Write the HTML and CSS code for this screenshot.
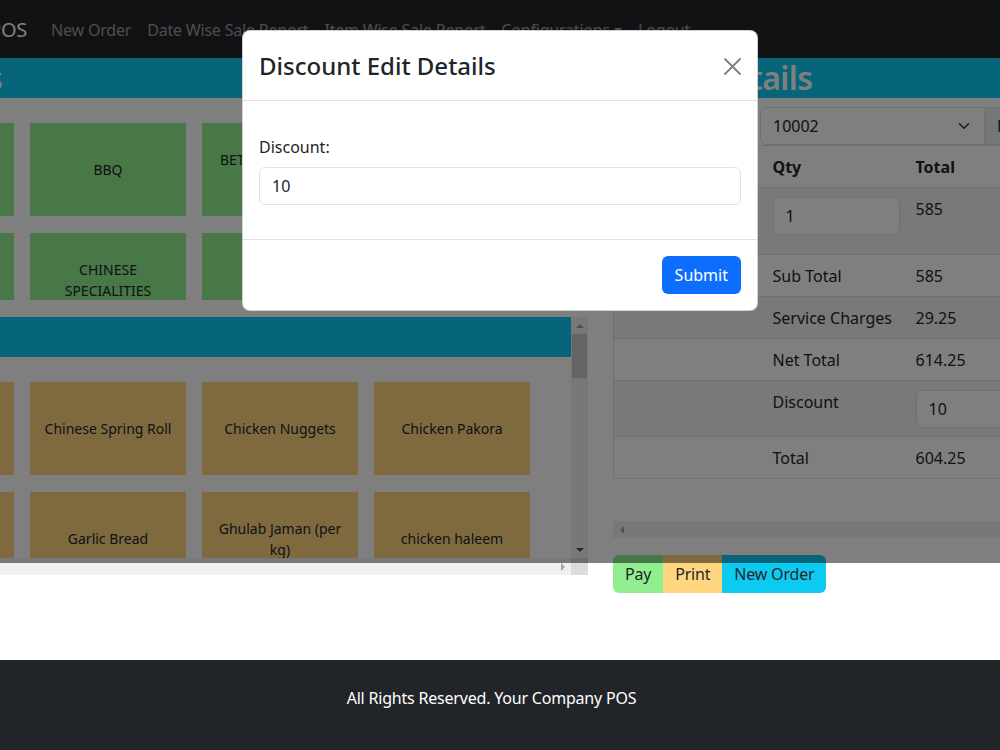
FILE: index.html
```html
<!DOCTYPE html>
<html lang="en">
<head>
    <meta charset="UTF-8">
    <meta name="viewport" content="width=device-width, initial-scale=1.0">
    <title>POS - New Order</title>
    <link rel="stylesheet" href="styles.css">
</head>
<body>
    <nav class="navbar">
        <div class="nav-inner">
            <a class="brand" href="#">POS</a>
            <a class="nav-link" href="#">New Order</a>
            <a class="nav-link" href="#">Date Wise Sale Report</a>
            <a class="nav-link" href="#">Item Wise Sale Report</a>
            <a class="nav-link dropdown-toggle" href="#">Configurations</a>
            <a class="nav-link" href="#">Logout</a>
        </div>
    </nav>

    <main class="main">
        <section class="left-col">
            <div class="left-inner">
                <h2 class="panel-title">Categories</h2>
                <div class="category-box">
                    <div class="tile-grid">
                        <div class="tile tile-cat">APPETIZERS</div>
                        <div class="tile tile-cat">BBQ</div>
                        <div class="tile tile-cat">BETWEEN BREADS DEALS</div>
                        <div class="tile tile-cat">BEVERAGES</div>
                        <div class="tile tile-cat">BREADS</div>
                        <div class="tile tile-cat">CHINESE SPECIALITIES</div>
                        <div class="tile tile-cat">DESSERTS</div>
                        <div class="tile tile-cat">KARAHI</div>
                    </div>
                </div>

                <div class="items-box">
                    <div class="items-view">
                        <h2 class="panel-title">Items</h2>
                        <div class="tile-grid">
                            <div class="tile tile-item">Chicken Corn Soup</div>
                            <div class="tile tile-item">Chinese Spring Roll</div>
                            <div class="tile tile-item">Chicken Nuggets</div>
                            <div class="tile tile-item">Chicken Pakora</div>
                            <div class="tile tile-item">French Fries</div>
                            <div class="tile tile-item">Garlic Bread</div>
                            <div class="tile tile-item">Ghulab Jaman (per kg)</div>
                            <div class="tile tile-item">chicken haleem</div>
                            <div class="tile tile-item">Hot &amp; Sour Soup</div>
                            <div class="tile tile-item">Fish Crackers</div>
                            <div class="tile tile-item">Fish Fingers</div>
                            <div class="tile tile-item">Dynamite Prawns</div>
                            <div class="tile tile-item">Chicken Tikka</div>
                            <div class="tile tile-item">Seekh Kabab</div>
                            <div class="tile tile-item">Malai Boti</div>
                            <div class="tile tile-item">Reshmi Kabab</div>
                        </div>
                    </div>
                    <div class="vbar">
                        <span class="sb-btn"><i class="arrow arrow-up"></i></span>
                        <span class="sb-thumb"></span>
                        <span class="sb-btn sb-end"><i class="arrow arrow-down"></i></span>
                    </div>
                    <div class="hbar">
                        <span class="sb-btn"><i class="arrow arrow-left"></i></span>
                        <span class="sb-btn"><i class="arrow arrow-right"></i></span>
                    </div>
                    <div class="sb-corner"></div>
                </div>
            </div>
        </section>

        <section class="right-col">
            <h2 class="panel-title">Order Details</h2>
            <div class="right-body">
                <div class="table-select">
                    <label for="tableNo">Table No</label>
                    <select id="tableNo" class="form-select">
                        <option>10002</option>
                    </select>
                    <span class="addon">New</span>
                </div>

                <div class="table-wrap">
                    <table class="order-table">
                        <thead>
                            <tr>
                                <th>Item</th>
                                <th>Qty</th>
                                <th>Total</th>
                            </tr>
                        </thead>
                        <tbody>
                            <tr>
                                <td>Chicken Karahi (Half)</td>
                                <td><input type="text" class="form-control qty-input" value="1"></td>
                                <td>585</td>
                            </tr>
                            <tr>
                                <td></td>
                                <td>Sub Total</td>
                                <td>585</td>
                            </tr>
                            <tr>
                                <td></td>
                                <td>Service Charges</td>
                                <td>29.25</td>
                            </tr>
                            <tr>
                                <td></td>
                                <td>Net Total</td>
                                <td>614.25</td>
                            </tr>
                            <tr>
                                <td></td>
                                <td>Discount</td>
                                <td><input type="text" class="form-control" value="10"></td>
                            </tr>
                            <tr>
                                <td></td>
                                <td>Total</td>
                                <td>604.25</td>
                            </tr>
                        </tbody>
                    </table>
                    <div class="hbar">
                        <span class="sb-btn"><i class="arrow arrow-left"></i></span>
                        <span class="sb-btn"><i class="arrow arrow-right"></i></span>
                    </div>
                </div>

                <div class="btn-group">
                    <button class="btn btn-pay">Pay</button>
                    <button class="btn btn-print">Print</button>
                    <button class="btn btn-new">New Order</button>
                </div>
            </div>
        </section>
    </main>

    <footer class="footer">
        <p>All Rights Reserved. Your Company POS</p>
    </footer>

    <div class="modal-backdrop"></div>
    <div class="modal">
        <div class="modal-content">
            <div class="modal-header">
                <h4 class="modal-title">Discount Edit Details</h4>
                <button class="btn-close" aria-label="Close">
                    <svg width="17" height="17" viewBox="0 0 17 17">
                        <path d="M1 1L16 16M16 1L1 16" stroke="#000" stroke-width="1.8" stroke-linecap="round"/>
                    </svg>
                </button>
            </div>
            <div class="modal-body">
                <label for="discount" class="form-label">Discount:</label>
                <input id="discount" type="text" class="form-control" value="10">
            </div>
            <div class="modal-footer">
                <button class="btn btn-primary">Submit</button>
            </div>
        </div>
    </div>
</body>
</html>
```

FILE: styles.css
```css
* {
    box-sizing: border-box;
}

html, body {
    height: 100%;
    overflow: hidden;
}

body {
    font-family: "Noto Sans", "Liberation Sans", sans-serif;
    font-size: 16px;
    line-height: 1.5;
    color: #212529;
    background-color: #fff;
    margin: 0;
    display: flex;
    flex-direction: column;
    position: relative;
}

/* navbar */
.navbar {
    background-color: #212529;
    height: 58px;
    flex-shrink: 0;
    display: flex;
    align-items: center;
    padding-top: 2px;
}

.nav-inner {
    display: flex;
    align-items: center;
    margin-left: -11px;
    white-space: nowrap;
    letter-spacing: -0.2px;
}

.navbar a {
    text-decoration: none;
}

.brand {
    color: #fff;
    font-size: 20px;
    margin-right: 16px;
}

.nav-link {
    color: rgba(255, 255, 255, 0.55);
    padding: 0 8px;
}

.dropdown-toggle::after {
    content: "";
    display: inline-block;
    margin-left: 0.255em;
    vertical-align: 0.255em;
    border-top: 0.3em solid;
    border-right: 0.3em solid transparent;
    border-left: 0.3em solid transparent;
}

/* main layout */
.main {
    flex: 1;
    display: flex;
    align-items: flex-start;
    gap: 13px;
    overflow: hidden;
}

.left-col {
    flex: 0 0 588px;
    overflow: hidden;
}

.left-inner {
    width: 760px;
    margin-left: -172px;
}

.right-col {
    flex: 0 0 460px;
}

.panel-title {
    background-color: #0dcaf0;
    color: #fff;
    font-size: 32px;
    font-weight: 600;
    letter-spacing: -0.6px;
    line-height: 40px;
    height: 40px;
    margin: 0;
    padding: 0 12px;
    white-space: nowrap;
}

/* tiles */
.category-box {
    height: 202px;
    overflow: hidden;
    margin-bottom: 17px;
}

.tile-grid {
    display: flex;
    flex-wrap: wrap;
    gap: 17px 16px;
    padding: 25px 0 25px 30px;
}

.tile {
    width: 156px;
    height: 93px;
    padding: 0 10px;
    display: flex;
    align-items: center;
    justify-content: center;
    text-align: center;
    font-size: 14px;
    cursor: pointer;
}

.tile-cat {
    background-color: #90ee90;
}

.tile-item {
    background-color: #ffd580;
}

/* items panel with its scrollbars */
.items-box {
    display: grid;
    grid-template-columns: 1fr 17px;
    grid-template-rows: 241px 17px;
}

.items-view {
    overflow: hidden;
}

.vbar,
.hbar {
    background-color: #f0f0f0;
    display: flex;
    justify-content: space-between;
}

.vbar {
    flex-direction: column;
}

.hbar {
    height: 17px;
}

.sb-btn {
    width: 17px;
    height: 17px;
    display: flex;
    align-items: center;
    justify-content: center;
    flex-shrink: 0;
}

.sb-end {
    margin-top: auto;
}

.sb-thumb {
    height: 44px;
    margin: 0 1px;
    background-color: #c8c8c8;
}

.sb-corner {
    background-color: #dcdcdc;
}

.arrow {
    width: 0;
    height: 0;
    border: 4px solid transparent;
}

.arrow-up {
    border-top: none;
    border-bottom-color: #a3a3a3;
}

.arrow-down {
    border-bottom: none;
    border-top-color: #505050;
}

.arrow-left {
    border-left: none;
    border-right-color: #a3a3a3;
}

.arrow-right {
    border-right: none;
    border-left-color: #a3a3a3;
}

/* order details */
.right-body {
    padding: 0 12px;
}

.table-select {
    display: flex;
    align-items: center;
    margin-top: 9px;
    height: 38px;
}

.table-select label {
    width: 147px;
}

.form-select {
    width: 225px;
    height: 38px;
    padding: 6px 36px 6px 12px;
    font-family: inherit;
    font-size: 16px;
    color: #212529;
    background-color: #fff;
    border: 1px solid #dee2e6;
    border-radius: 6px 0 0 6px;
    appearance: none;
    background-image: url("data:image/svg+xml,%3Csvg xmlns='http://www.w3.org/2000/svg' viewBox='0 0 16 16'%3E%3Cpath fill='none' stroke='%23343a40' stroke-linecap='round' stroke-linejoin='round' stroke-width='2' d='m2 5 6 6 6-6'/%3E%3C/svg%3E");
    background-repeat: no-repeat;
    background-position: right 12px center;
    background-size: 16px 12px;
}

.addon {
    height: 38px;
    padding: 6px 12px;
    background-color: #e9ecef;
    border: 1px solid #dee2e6;
    border-left: none;
    border-radius: 0 6px 6px 0;
}

.order-table {
    width: 100%;
    table-layout: fixed;
    border-collapse: collapse;
    border: 1px solid #dee2e6;
    margin-bottom: 42px;
}

.order-table th:nth-child(1) {
    width: 151px;
}

.order-table th:nth-child(2) {
    width: 143px;
}

.order-table th,
.order-table td {
    text-align: left;
    vertical-align: top;
    padding: 9px 8px 8px;
    border-bottom: 1px solid #dee2e6;
}

.order-table th {
    font-weight: 700;
}

.order-table tbody tr:nth-child(odd) {
    background-color: #f2f2f2;
}

.form-control {
    display: block;
    width: 100%;
    height: 38px;
    padding: 6px 12px;
    font-family: inherit;
    font-size: 16px;
    color: #212529;
    background-color: #fff;
    border: 1px solid #dee2e6;
    border-radius: 6px;
    outline: none;
}

.qty-input {
    margin-bottom: 11px;
}

.btn-group {
    display: inline-flex;
    margin-top: 17px;
    border-radius: 6px;
    overflow: hidden;
}

.btn {
    font-family: inherit;
    font-size: 16px;
    line-height: 1.5;
    padding: 6px 12px;
    border: 1px solid transparent;
    color: #212529;
    cursor: pointer;
}

.btn-group .btn {
    padding: 6px 11px;
    letter-spacing: -0.2px;
}

.btn-pay {
    background-color: #90ee90;
}

.btn-print {
    background-color: #ffd580;
}

.btn-new {
    background-color: #0dcaf0;
}

/* footer */
.footer {
    flex: 0 0 90px;
    background-color: #212529;
    color: #fff;
    text-align: center;
    padding: 26px 17px 0 0;
    letter-spacing: -0.2px;
}

.footer p {
    margin: 0;
}

/* modal */
.modal-backdrop {
    position: absolute;
    top: 0;
    left: 0;
    width: 100%;
    height: 563px;
    background-color: rgba(0, 0, 0, 0.5);
    z-index: 10;
}

.modal {
    position: absolute;
    top: 30px;
    left: 0;
    right: 0;
    display: flex;
    justify-content: center;
    z-index: 11;
}

.modal-content {
    width: 516px;
    background-color: #fff;
    border: 1px solid rgba(0, 0, 0, 0.175);
    border-radius: 8px;
}

.modal-header {
    display: flex;
    align-items: center;
    padding: 17px 16px 16px;
    border-bottom: 1px solid #dee2e6;
}

.modal-title {
    margin: 0;
    font-size: 24px;
    font-weight: 500;
    line-height: 36px;
}

.btn-close {
    margin-left: auto;
    padding: 0;
    border: none;
    background: none;
    opacity: 0.5;
    display: flex;
    cursor: pointer;
}

.modal-body {
    padding: 34px 16px 34px;
}

.form-label {
    display: block;
    margin-bottom: 8px;
}

.modal-footer {
    display: flex;
    justify-content: flex-end;
    padding: 12px;
    border-top: 1px solid #dee2e6;
}

.modal-footer .btn {
    margin: 4px;
}

.btn-primary {
    background-color: #0d6efd;
    color: #fff;
    border-radius: 6px;
}
```
